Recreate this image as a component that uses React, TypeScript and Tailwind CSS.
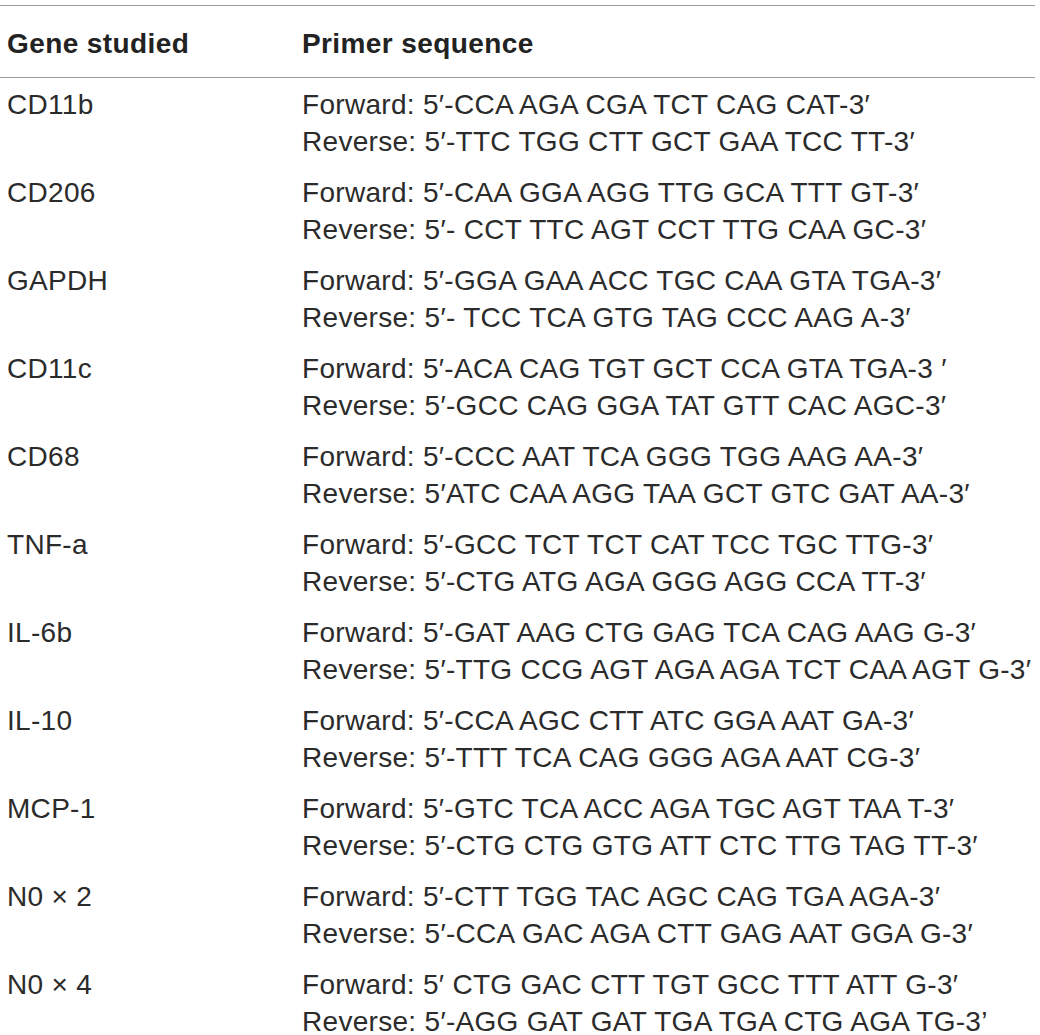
import React from "react";

const rows: { gene: string; fwd: string; rev: string }[] = [
  { gene: "CD11b", fwd: "Forward: 5′-CCA AGA CGA TCT CAG CAT-3′", rev: "Reverse: 5′-TTC TGG CTT GCT GAA TCC TT-3′" },
  { gene: "CD206", fwd: "Forward: 5′-CAA GGA AGG TTG GCA TTT GT-3′", rev: "Reverse: 5′- CCT TTC AGT CCT TTG CAA GC-3′" },
  { gene: "GAPDH", fwd: "Forward: 5′-GGA GAA ACC TGC CAA GTA TGA-3′", rev: "Reverse: 5′- TCC TCA GTG TAG CCC AAG A-3′" },
  { gene: "CD11c", fwd: "Forward: 5′-ACA CAG TGT GCT CCA GTA TGA-3 ′", rev: "Reverse: 5′-GCC CAG GGA TAT GTT CAC AGC-3′" },
  { gene: "CD68", fwd: "Forward: 5′-CCC AAT TCA GGG TGG AAG AA-3′", rev: "Reverse: 5′ATC CAA AGG TAA GCT GTC GAT AA-3′" },
  { gene: "TNF-a", fwd: "Forward: 5′-GCC TCT TCT CAT TCC TGC TTG-3′", rev: "Reverse: 5′-CTG ATG AGA GGG AGG CCA TT-3′" },
  { gene: "IL-6b", fwd: "Forward: 5′-GAT AAG CTG GAG TCA CAG AAG G-3′", rev: "Reverse: 5′-TTG CCG AGT AGA AGA TCT CAA AGT G-3′" },
  { gene: "IL-10", fwd: "Forward: 5′-CCA AGC CTT ATC GGA AAT GA-3′", rev: "Reverse: 5′-TTT TCA CAG GGG AGA AAT CG-3′" },
  { gene: "MCP-1", fwd: "Forward: 5′-GTC TCA ACC AGA TGC AGT TAA T-3′", rev: "Reverse: 5′-CTG CTG GTG ATT CTC TTG TAG TT-3′" },
  { gene: "N0 × 2", fwd: "Forward: 5′-CTT TGG TAC AGC CAG TGA AGA-3′", rev: "Reverse: 5′-CCA GAC AGA CTT GAG AAT GGA G-3′" },
  { gene: "N0 × 4", fwd: "Forward: 5′ CTG GAC CTT TGT GCC TTT ATT G-3′", rev: "Reverse: 5′-AGG GAT GAT TGA TGA CTG AGA TG-3’" },
];

export default function App() {
  return (
    <div
      className="w-[1040px] h-[1035px] overflow-hidden bg-white pt-[5px] text-[#2b2b2b] text-[28px] leading-[37px]"
      style={{ fontFamily: '"Liberation Sans", Arial, sans-serif' }}
    >
      <div className="w-[1035px] border-t border-b border-[#9c9c9c] grid grid-cols-[302px_1fr] pt-[19px] pb-[15px] font-bold tracking-[0.4px] text-[#222]">
        <div className="pl-[7px]">Gene studied</div>
        <div>Primer sequence</div>
      </div>
      <div className="flex flex-col gap-[14px] pt-[7.5px] tracking-[0.3px]">
        {rows.map((r) => (
          <div key={r.gene} className="grid grid-cols-[302px_1fr]">
            <div className="pl-[7px] whitespace-pre">{r.gene}</div>
            <div className="flex flex-col whitespace-pre">
              <span>{r.fwd}</span>
              <span>{r.rev}</span>
            </div>
          </div>
        ))}
      </div>
    </div>
  );
}
